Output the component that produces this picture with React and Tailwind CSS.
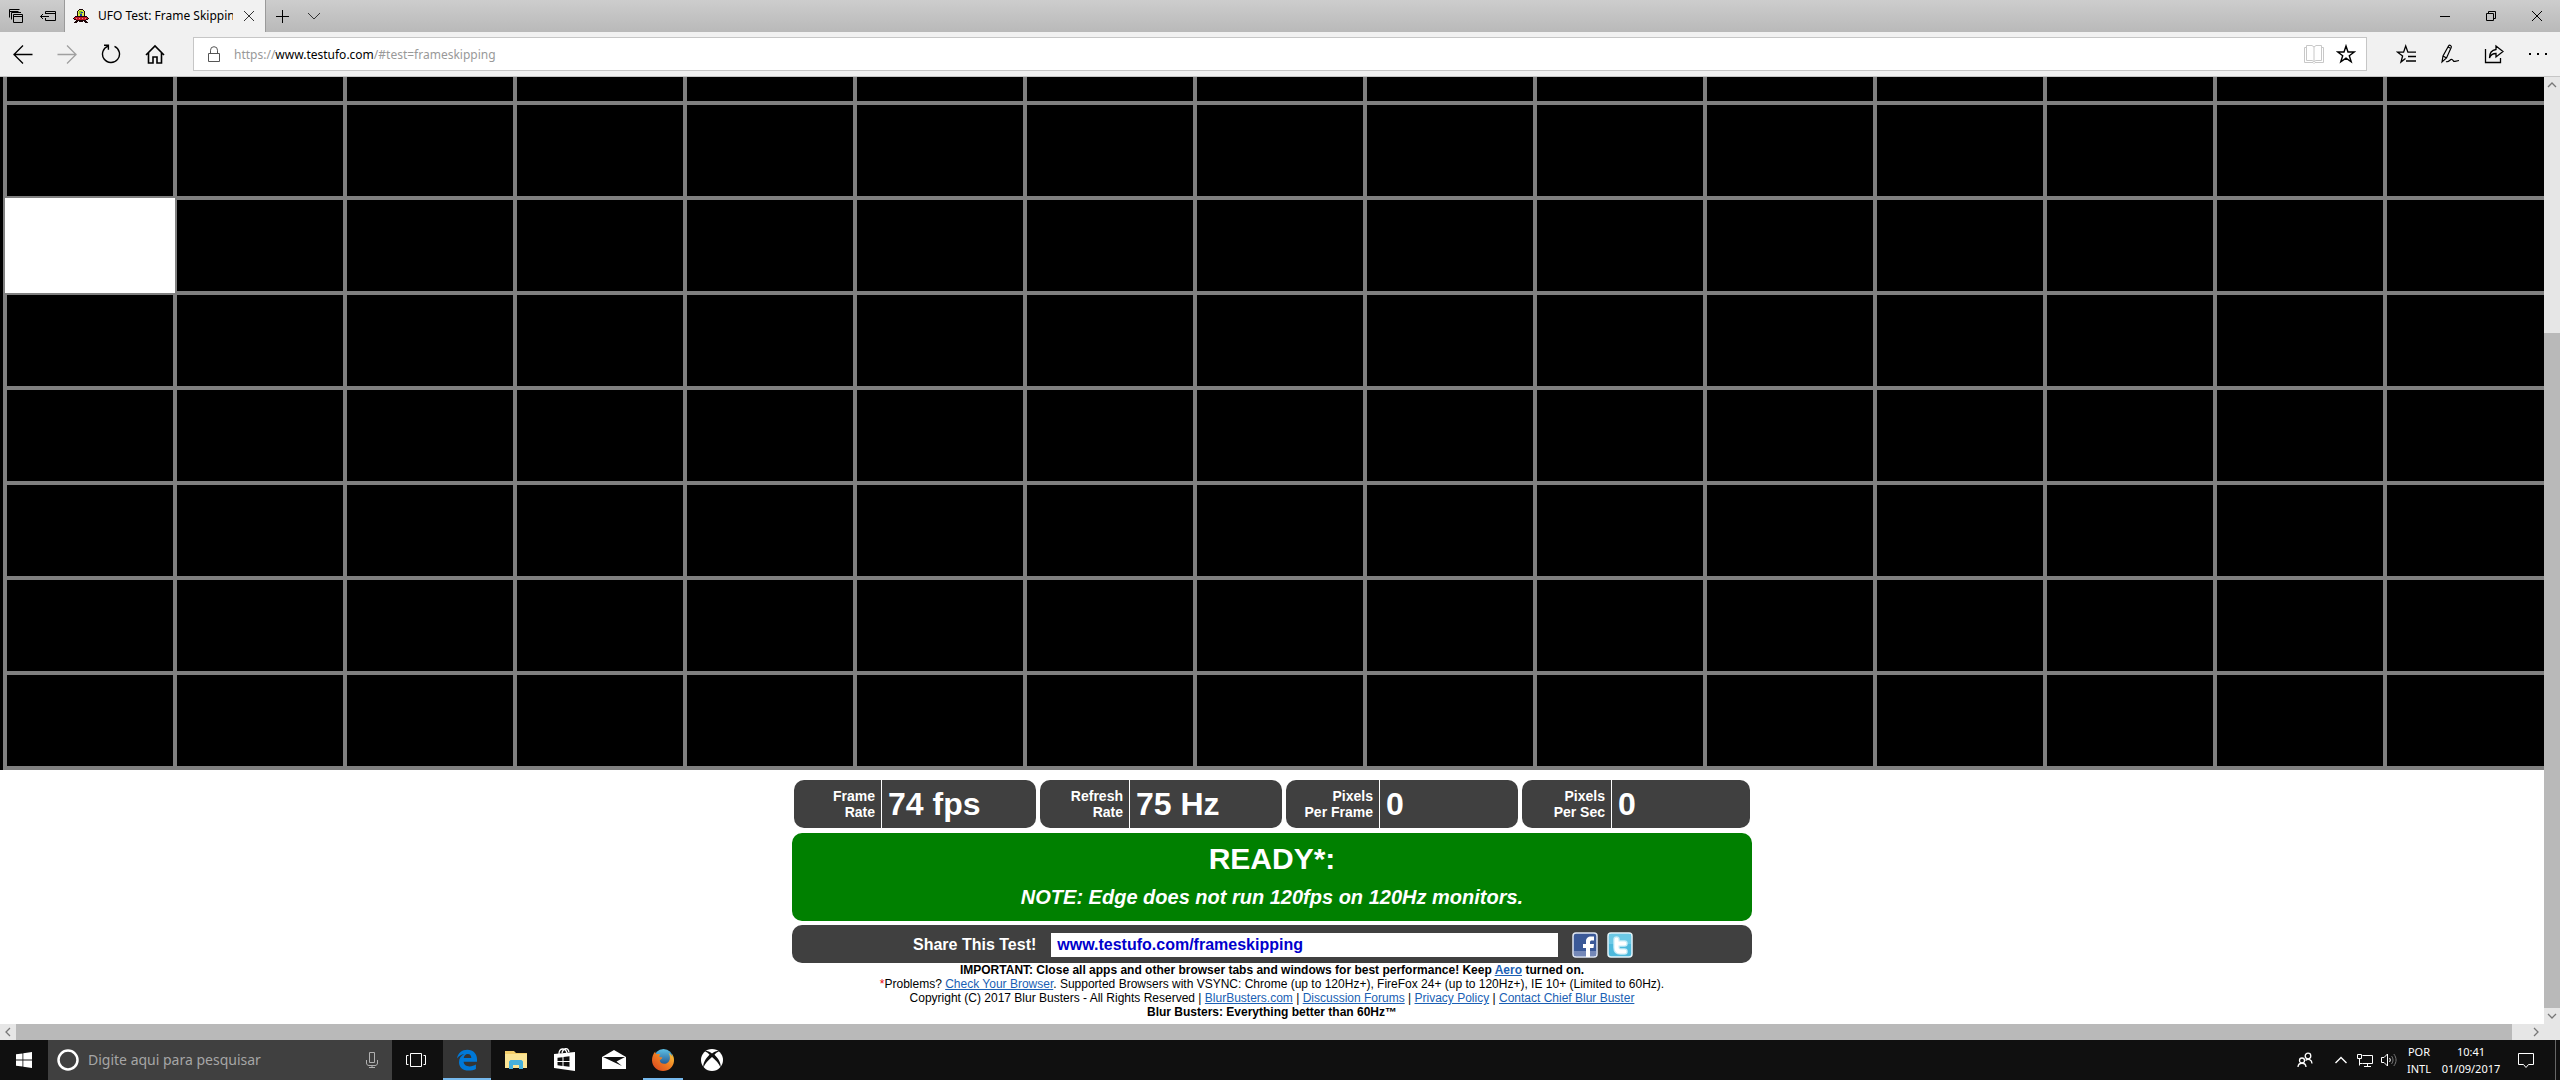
import React from "react";

// Highlighted square of the frame skipping pattern
const ACTIVE_CELL = { row: 1, col: 0 };
const ROWS = 7;
const COLS = 15;

const stats = [
  { label: ["Frame", "Rate"], value: "74 fps", box: "w-[242px]", head: "w-[87px]" },
  { label: ["Refresh", "Rate"], value: "75 Hz", box: "w-[242px]", head: "w-[89px]" },
  { label: ["Pixels", "Per Frame"], value: "0", box: "w-[232px]", head: "w-[93px]" },
  { label: ["Pixels", "Per Sec"], value: "0", box: "w-[228px]", head: "w-[89px]" },
];

const Icon = ({ size = 20, className = "", children }) => (
  <svg
    width={size}
    height={size}
    viewBox={`0 0 ${size} ${size}`}
    fill="none"
    stroke="currentColor"
    className={`shrink-0 ${className}`}
    aria-hidden="true"
  >
    {children}
  </svg>
);

const IconButton = ({ label, className = "", children }) => (
  <button type="button" aria-label={label} className={`flex shrink-0 items-center justify-center ${className}`}>
    {children}
  </button>
);

const UfoIcon = () => (
  <svg width="16" height="14" viewBox="0 0 16 14" shapeRendering="crispEdges" className="shrink-0" aria-hidden="true">
    <path d="M6 0h4v1h1v1h1v5h2v1h1v1h1v1h-1v1h-2v1h1v1h1v1h-3v-1h-1v-1h-1v1H6v-1H5v1H4v1H1v-1h1v-1h1v-1H1v-1H0V9h1V8h1V7h2V2h1V1h1z" fill="#1c0507" />
    <path d="M6 1h4v1h1v5H5V2h1z" fill="#d9ea3c" />
    <path d="M6 2h3v3H6z" fill="#79b52e" />
    <path d="M8 3h2v1H8zM7 5h2v2H7z" fill="#1b3fae" />
    <path d="M2 8h12v1h1v1h-2v1H3v-1H1V9h1z" fill="#c41626" />
    <path d="M3 9h1v1H3zM6 9h1v1H6zM9 9h1v1H9zM12 9h1v1h-1z" fill="#f0868c" />
  </svg>
);

function TabBar() {
  return (
    <div className="flex h-8 shrink-0 items-stretch bg-linear-to-b from-[#cdcdcd] to-[#b9b9b9]">
      <IconButton label="Tabs you've set aside" className="w-8">
        <Icon size={14}>
          <path d="M.5 8.500v-8h10M.5 2.500h9M2.500 10.500v-7h9.500M4.500 5.500h9v8h-9zM4.500 7.500h9" />
        </Icon>
      </IconButton>
      <IconButton label="Set these tabs aside" className="w-8">
        <Icon size={16}>
          <path d="M5.5 6V3.500h10v9h-10V10M5.500 5.500h10M9 8.500H.5M3 6L.5 8.500 3 11" />
        </Icon>
      </IconButton>
      <div className="flex w-[202px] items-center border-x border-[#9a9a9a] bg-[#f1f1f1] pl-2 pr-1">
        <UfoIcon />
        <span className="ml-[9px] flex-1 overflow-hidden whitespace-nowrap text-xs text-black">
          UFO Test: Frame Skipping
        </span>
        <IconButton label="Close tab" className="ml-1 h-6 w-6">
          <Icon size={12} className="text-[#333]">
            <path d="M1 1l10 10M11 1L1 11" />
          </Icon>
        </IconButton>
      </div>
      <IconButton label="New tab" className="w-8">
        <Icon size={14}>
          <path d="M7.5 1v13M1 7.5h13" />
        </Icon>
      </IconButton>
      <IconButton label="Show tab previews" className="w-8">
        <Icon size={14} className="text-[#333]">
          <path d="M1 4l6 6 6-6" />
        </Icon>
      </IconButton>
      <div className="ml-auto flex">
        <IconButton label="Minimize" className="w-[46px]">
          <Icon size={10}>
            <path d="M0 5.5h10" />
          </Icon>
        </IconButton>
        <IconButton label="Restore" className="w-[46px]">
          <Icon size={10}>
            <path d="M.5 2.5h7v7h-7zM2.5 2.5v-2h7v7h-2" />
          </Icon>
        </IconButton>
        <IconButton label="Close" className="w-[46px]">
          <Icon size={10}>
            <path d="M0 0l10 10M10 0L0 10" />
          </Icon>
        </IconButton>
      </div>
    </div>
  );
}

function AddressBar() {
  return (
    <div className="flex h-[45px] shrink-0 items-center border-b border-[#c6c6c6] bg-[#f1f1f1] pl-px text-black">
      <IconButton label="Back" className="h-10 w-11">
        <Icon>
          <path d="M.5 10.500h19M10 1.500l-9 9 9 9" strokeWidth="1.3" />
        </Icon>
      </IconButton>
      <IconButton label="Forward" className="h-10 w-11 text-[#a0a0a0]">
        <Icon>
          <path d="M.5 10.500h19M10 1.500l9 9-9 9" strokeWidth="1.3" />
        </Icon>
      </IconButton>
      <IconButton label="Refresh" className="h-10 w-11">
        <Icon>
          <path d="M7 2.1A8.5 8.5 0 1 0 13.5 2.3M3 1.2h4.4v4.6" strokeWidth="1.4" />
        </Icon>
      </IconButton>
      <IconButton label="Home" className="h-10 w-11">
        <Icon>
          <path d="M1 11L10 2l9 9M3.500 9v10h4.500v-6h4v6h4.500V9" strokeWidth="1.600" />
        </Icon>
      </IconButton>
      <div className="ml-4 flex h-[34px] flex-1 items-center border border-[#c6c6c6] bg-white pl-3">
        <Icon size={16} className="text-[#555]">
          <path d="M2.5 7.5h11v8h-11zM4.5 7.5V4.2a3.5 3.5 0 0 1 7 0v3.3" />
        </Icon>
        <p className="ml-3 flex-1 pt-px text-xs text-[#999]">
          https://<span className="text-black">www.testufo.com</span>/#test=frameskipping
        </p>
        <IconButton label="Reading view" className="h-8 w-8 text-[#c8c8c8]">
          <Icon>
            <path d="M2.500 3.500h-2v15h8.500l1 1 1-1h8.500v-15h-2M2.500 16.500v-15H8l2 1.500 2-1.500h5.500v15H12l-2 1-2-1zM10 3v14.500" />
          </Icon>
        </IconButton>
        <IconButton label="Add to favorites" className="mr-1 h-8 w-8">
          <Icon>
            <path d="M10 2l2 6h6.300l-5 3.800 1.900 6L10 14.200l-5.200 3.600 1.900-6-5-3.800H8z" strokeWidth="1.400" />
          </Icon>
        </IconButton>
      </div>
      <div className="ml-[17px] flex">
        <IconButton label="Hub" className="h-10 w-11">
          <Icon>
            <path d="M9.500 14.500L5 18l1.600-6-5-3.800h6L9.700 2l2.200 6.200H20M12 12.500h8M10 17h10" strokeWidth="1.300" />
          </Icon>
        </IconButton>
        <IconButton label="Make a web note" className="h-10 w-11">
          <Icon>
            <path d="M2 18l1-6L8.500 2c1-1.500 3.500-.5 2.700 1.500L6.500 14zM3 12l3.500 2M8 3l3 1.500M6 17.500c3 1.500 4-3 6-2s1 2.500 3 1.800l4-.8" strokeWidth="1.200" />
          </Icon>
        </IconButton>
        <IconButton label="Share" className="h-10 w-11">
          <Icon>
            <path d="M1.500 5v13.500h15V14M12 2l7 5.500-7 5.500v-3.500C8.500 9.500 6.500 11 5.500 14c0-5 2.500-8 6.500-8.500z" strokeWidth="1.300" />
          </Icon>
        </IconButton>
        <IconButton label="Settings and more" className="h-10 w-11">
          <Icon>
            <path d="M1 9h2v2H1zM9 9h2v2H9zM17 9h2v2h-2z" fill="currentColor" stroke="none" />
          </Icon>
        </IconButton>
      </div>
    </div>
  );
}

function Grid() {
  const cols = Array.from({ length: COLS });
  return (
    <div className="overflow-hidden bg-black pl-[3px]">
      <div className="w-max border-b-2 border-l-2 border-[#808080]">
        <div className="flex">
          {cols.map((_, c) => (
            <div key={c} className="h-[26px] w-[170px] border-2 border-t-0 border-[#808080]" />
          ))}
        </div>
        {Array.from({ length: ROWS }).map((_, r) => (
          <div key={r} className="flex">
            {cols.map((_, c) => (
              <div
                key={c}
                className={`h-[95px] w-[170px] ${
                  r === ACTIVE_CELL.row && c === ACTIVE_CELL.col ? "bg-white" : "border-2 border-[#808080]"
                }`}
              />
            ))}
          </div>
        ))}
      </div>
    </div>
  );
}

const PageLink = ({ href, children }) => (
  <a href={href} className="text-[#1a5fb4] underline">
    {children}
  </a>
);

function Results() {
  return (
    <div className="mx-auto w-[960px] max-w-full pt-[10px] font-['Liberation_Sans',Arial,sans-serif]">
      <div className="flex gap-1 px-[2px] font-bold text-white">
        {stats.map((s, i) => (
          <div key={i} className={`flex h-12 overflow-hidden rounded-[10px] bg-[#404040] ${s.box}`}>
            <div className={`${s.head} flex shrink-0 flex-col justify-center pr-[6px] text-right text-sm leading-4`}>
              <span>{s.label[0]}</span>
              <span>{s.label[1]}</span>
            </div>
            <div className="flex flex-1 items-center border-l border-white pl-[6px] text-[32px] leading-none">
              {s.value}
            </div>
          </div>
        ))}
      </div>

      <div className="mt-[5px] h-[88px] rounded-[10px] bg-[#008000] pt-2 text-center font-bold text-white">
        <h1 className="text-[30px] leading-9">READY*:</h1>
        <p className="text-xl leading-10 italic">NOTE: Edge does not run 120fps on 120Hz monitors.</p>
      </div>

      <div className="mt-1 flex h-[38px] items-center rounded-[10px] bg-[#404040] pl-[121px] pt-[2px]">
        <label htmlFor="share" className="text-base font-bold text-white">
          Share This Test!
        </label>
        <input
          id="share"
          readOnly
          value="www.testufo.com/frameskipping"
          className="ml-[15px] h-6 w-[507px] bg-white px-[6px] text-base font-bold text-[#0000cc]"
        />
        <a href="#facebook" aria-label="Facebook" className="ml-[14px]">
          <svg width="26" height="26" viewBox="0 0 26 26">
            <rect x="1" y="1" width="24" height="24" rx="3" fill="#3b5998" stroke="#dfe6f3" strokeWidth="1.500" />
            <path d="M2 19h22v5H2z" fill="#7488b8" />
            <path d="M14 25v-9h-3v-4h3V9.500C14 6 16 4.500 19 4.500h3v4h-2c-1.500 0-2 .5-2 1.800V12h4l-.5 4H18v9z" fill="#fff" />
          </svg>
        </a>
        <a href="#twitter" aria-label="Twitter" className="ml-[9px]">
          <svg width="26" height="26" viewBox="0 0 26 26">
            <rect x="1" y="1" width="24" height="24" rx="3" fill="#4db9dc" stroke="#e3f4fa" strokeWidth="1.500" />
            <path d="M2 2h22v10H2z" fill="#6cc9e6" />
            <path d="M9.500 7.500v8c0 3 1.500 4 4 4h4M9.500 11.500h8" fill="none" stroke="#c4ebf7" strokeWidth="6.500" strokeLinecap="round" strokeLinejoin="round" />
            <path d="M9.500 7.500v8c0 3 1.500 4 4 4h4M9.500 11.500h8" fill="none" stroke="#fff" strokeWidth="4" strokeLinecap="round" strokeLinejoin="round" />
          </svg>
        </a>
      </div>

      <div className="text-center text-xs leading-[14px] text-black">
        <p className="font-bold">
          IMPORTANT: Close all apps and other browser tabs and windows for best performance! Keep{" "}
          <PageLink href="#aero">Aero</PageLink> turned on.
        </p>
        <p>
          <span className="text-red-600">*</span>Problems? <PageLink href="#browser">Check Your Browser</PageLink>.
          Supported Browsers with VSYNC: Chrome (up to 120Hz+), FireFox 24+ (up to 120Hz+), IE 10+ (Limited to 60Hz).
        </p>
        <p>
          Copyright (C) 2017 Blur Busters - All Rights Reserved |{" "}
          <PageLink href="#blurbusters">BlurBusters.com</PageLink> | <PageLink href="#forums">Discussion Forums</PageLink>{" "}
          | <PageLink href="#privacy">Privacy Policy</PageLink> |{" "}
          <PageLink href="#contact">Contact Chief Blur Buster</PageLink>
        </p>
        <p className="font-bold">Blur Busters: Everything better than 60Hz™</p>
      </div>
    </div>
  );
}

const ScrollArrow = ({ d }) => (
  <Icon size={16} className="text-[#777]">
    <path d={d} strokeWidth="1.300" />
  </Icon>
);

function Taskbar() {
  return (
    <div className="flex h-10 shrink-0 items-stretch bg-[#101010] text-white">
      <IconButton label="Start" className="w-12">
        <svg width="16" height="16" viewBox="0 0 16 16" fill="#fff">
          <path d="M0 2.300l6.500-.9v6.200H0zM7.300 1.300L16 0v7.600H7.300zM0 8.400h6.500v6.200L0 13.700zM7.300 8.400H16V16l-8.700-1.300z" />
        </svg>
      </IconButton>
      <div className="flex w-[344px] items-center bg-[#404040] pl-2">
        <Icon size={24}>
          <circle cx="12" cy="12" r="9.500" strokeWidth="2.500" />
        </Icon>
        <input
          aria-label="Pesquisar"
          placeholder="Digite aqui para pesquisar"
          className="ml-2 min-w-0 flex-1 text-sm placeholder:text-[#a6a6a6]"
        />
        <IconButton label="Microphone" className="w-10 text-[#b0b0b0]">
          <Icon size={16}>
            <path d="M5.500.5h5v10h-5zM2.500 8v3c0 1.500 1 2.500 2.500 2.500h6c1.500 0 2.500-1 2.500-2.500V8M8 13.500v2M5 15.500h6" />
          </Icon>
        </IconButton>
      </div>
      <IconButton label="Task view" className="w-[51px] pr-[3px]">
        <Icon size={20}>
          <path d="M4.500 3.500h11v13h-11zM2.500 5.500h-2v9h2M17.500 5.500h2v9h-2" />
        </Icon>
      </IconButton>
      <IconButton label="Edge" className="w-12 border-b-2 border-[#76b9ed] bg-[#343434] pt-[2px]">
        <svg width="22" height="22" viewBox="0 0 22 22">
          <path d="M1 9.500C2 4 6 .8 11.300.8c6 0 9.700 4.200 9.700 9.400v2.600H7.600c.2 3 2.700 4.600 6 4.600 2.400 0 4.600-.7 6.300-1.800v4.300c-2 1.100-4.500 1.700-7.300 1.700C6.400 21.600 3 17.800 3 13.200c0-3.800 2-6.600 5.200-8.200C5.300 5.400 3 7 1 9.500zM7.700 9h7.600c0-2.300-1-4-3.500-4-2.300 0-3.800 1.700-4.100 4z" fill="#0078d7" />
        </svg>
      </IconButton>
      <IconButton label="File Explorer" className="ml-px w-12">
        <svg width="22" height="20" viewBox="0 0 22 20">
          <path d="M0 1h9l2 2h11v15H0z" fill="#f5cf6b" />
          <path d="M0 4h22v14H0z" fill="#fbe596" />
          <path d="M4 19v-7.500L5.500 10h11l1.500 1.500V19h-4v-4H8v4z" fill="#45b0dc" />
        </svg>
      </IconButton>
      <IconButton label="Store" className="ml-px w-12">
        <svg width="22" height="24" viewBox="0 0 22 24">
          <path d="M0 6l21-2v19L0 20z" fill="#fff" />
          <path d="M5 6c0-6 6-7 8-1M8 5c1-5 6-6 7-1" fill="none" stroke="#fff" strokeWidth="1.300" />
          <path d="M3.500 9.800l5-.6v3.900h-5zM9.500 9l6-.7v4.800h-6zM3.500 14h5v3.900l-5-.6zM9.500 14h6v4.800l-6-.7z" fill="#101010" />
        </svg>
      </IconButton>
      <IconButton label="Mail" className="ml-px w-12">
        <svg width="24" height="20" viewBox="0 0 24 20">
          <path d="M0 7l12-7 12 7v12H0z" fill="#fff" />
          <path d="M1 7h22l-8.500 4.500L20 16z" fill="#101010" />
        </svg>
      </IconButton>
      <IconButton label="Firefox" className="ml-[5px] w-10 border-b-2 border-[#76b9ed] pt-[2px]">
        <svg width="24" height="24" viewBox="0 0 24 24">
          <defs>
            <linearGradient id="fox" x1="0" y1="1" x2="1" y2="0">
              <stop offset="0" stopColor="#d8401f" />
              <stop offset=".5" stopColor="#ee7a22" />
              <stop offset="1" stopColor="#fbd13f" />
            </linearGradient>
            <linearGradient id="globe" x1="0" y1="0" x2="0" y2="1">
              <stop offset="0" stopColor="#5cc0e6" />
              <stop offset="1" stopColor="#173f7d" />
            </linearGradient>
          </defs>
          <circle cx="12.500" cy="10.500" r="9.500" fill="url(#globe)" />
          <path d="M1 12.500C1 9 2 6 4.200 3.500c.1 1.500.5 2.200 1.500 2.700 1.300-.4 2.500-.3 3.700.1-.9.900-1.300 1.700-1 2.600l3 .6c-.2 1.500-1.800 1.900-2.700 2.700.3 2.600 2.800 4 5.600 3.500 3.200-.6 5-3.300 4.500-7.200-.2-1.500-.6-2.500-1.300-3.500 2 1 3.200 2.200 3.800 3.800 0-1-.2-2-.7-3.200C22.500 8 23.200 10.300 23 13c-.5 6-5 10-11 10S1.300 18.500 1 12.500z" fill="url(#fox)" />
        </svg>
      </IconButton>
      <IconButton label="Xbox" className="ml-[5px] w-12">
        <svg width="22" height="22" viewBox="0 0 22 22">
          <circle cx="11" cy="11" r="11" fill="#fff" />
          <path d="M4 2.500c2-1 4.500 0 7 2 2.500-2 5-3 7-2-1.500.3-3 1.500-4.500 3.300 3.800 3.700 7 8.700 6 12.700-1.200-3.500-4.800-7.500-8.500-10.500-3.700 3-7.300 7-8.500 10.500-1-4 2.200-9 6-12.700C7 4 5.500 2.800 4 2.500z" fill="#101010" />
        </svg>
      </IconButton>

      <div className="ml-auto flex items-center">
        <IconButton label="People" className="h-10 w-12">
          <Icon size={16}>
            <circle cx="11" cy="4" r="2.800" strokeWidth="1.300" />
            <circle cx="5" cy="8.500" r="2.500" strokeWidth="1.300" />
            <path d="M1 15c.3-5 7.700-5 8 0M8.500 8.500c2.500-2.500 6.500-.7 6.500 3" strokeWidth="1.300" />
          </Icon>
        </IconButton>
        <IconButton label="Show hidden icons" className="h-10 w-6">
          <Icon size={12}>
            <path d="M.5 9L6 3.500 11.500 9" strokeWidth="1.400" />
          </Icon>
        </IconButton>
        <IconButton label="Network" className="h-10 w-6">
          <Icon size={16}>
            <path d="M5.500 3.500h10v8h-10M.5 2.500h4v4h-4zM2.500 6.500v7M2.500 11.500h3M10.500 11.500v3M7 14.500h7" />
          </Icon>
        </IconButton>
        <IconButton label="Volume" className="h-10 w-6">
          <Icon size={16}>
            <path d="M.5 5.500h2.500l3.500-3.500v12L3 10.500H.5zM8.500 6c1 1.300 1 2.700 0 4" />
            <path d="M10.500 4c2 2.500 2 5.500 0 8M12.800 2c3 4 3 8 0 12" stroke="#777" />
          </Icon>
        </IconButton>
        <div className="mr-1 w-9 text-center text-[11px] leading-[17px]">
          <p>POR</p>
          <p>INTL</p>
        </div>
        <div className="w-[60px] whitespace-nowrap text-center text-[11px] leading-[17px]">
          <p>10:41</p>
          <p>01/09/2017</p>
        </div>
        <IconButton label="Notifications" className="mr-1 h-10 w-[50px]">
          <Icon size={16}>
            <path d="M.5 1.500h15v11h-5l-2.500 3-2.500-3h-5z" />
          </Icon>
        </IconButton>
        <div className="h-10 w-[5px] border-l border-[#666]" />
      </div>
    </div>
  );
}

export default function App() {
  return (
    <div className="flex h-screen flex-col overflow-hidden bg-white font-['Noto_Sans',sans-serif] text-black">
      <TabBar />
      <AddressBar />
      <div className="flex min-h-0 flex-1">
        <main className="min-w-0 flex-1 overflow-hidden">
          <Grid />
          <Results />
        </main>
        <div className="flex w-4 shrink-0 flex-col bg-[#e6e6e6]">
          <ScrollArrow d="M4 10l4-4 4 4" />
          <div className="flex flex-1 flex-col">
            <div className="flex-[240]" />
            <div className="flex-[675] bg-[#b9b9b9]" />
          </div>
          <ScrollArrow d="M4 6l4 4 4-4" />
        </div>
      </div>
      <div className="flex h-4 shrink-0 bg-[#e6e6e6] pr-4">
        <ScrollArrow d="M10 4L6 8l4 4" />
        <div className="mr-4 flex-1 bg-[#b9b9b9]" />
        <ScrollArrow d="M6 4l4 4-4 4" />
      </div>
      <Taskbar />
    </div>
  );
}
